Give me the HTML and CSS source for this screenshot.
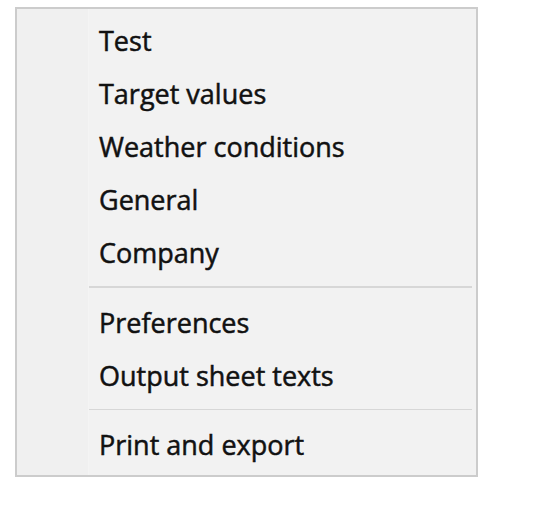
FILE: index.html
```html
<!DOCTYPE html>
<html>
<head>
<meta charset="utf-8">
<link rel="stylesheet" href="styles.css">
</head>
<body>
<div class="menu">
  <div class="gutter"></div>
  <div class="items">
    <div class="item">Test</div>
    <div class="item">Target values</div>
    <div class="item">Weather conditions</div>
    <div class="item">General</div>
    <div class="item">Company</div>
    <div class="sep"></div>
    <div class="item">Preferences</div>
    <div class="item">Output sheet texts</div>
    <div class="sep"></div>
    <div class="item">Print and export</div>
  </div>
</div>
</body>
</html>
```
FILE: styles.css
```css
html, body {
  margin: 0;
  padding: 0;
  background: #ffffff;
}
body {
  padding: 7px 0 0 15px;
  font-family: "Open Sans", "Noto Sans", "DejaVu Sans", sans-serif;
}
.menu {
  display: flex;
  width: 459px;
  height: 466px;
  border: 2px solid #cccccc;
  background: #f0f0f0;
  box-sizing: content-box;
}
.gutter {
  width: 71px;
  flex: none;
  background: #f0f0f0;
  border-right: 1px solid #f4f4f4;
}
.items {
  flex: 1;
  padding: 5px 4px 4px 0;
  background: #f2f2f2;
  display: flex;
  flex-direction: column;
}
.item {
  height: 53px;
  line-height: 53px;
  padding-left: 10px;
  font-size: 27px;
  font-weight: 400;
  -webkit-text-stroke: 0.5px #111111;
  color: #111111;
  white-space: nowrap;
}
.sep {
  height: 2px;
  margin: 7px 0 8px 0;
  background: #d7d7d7;
}
```
